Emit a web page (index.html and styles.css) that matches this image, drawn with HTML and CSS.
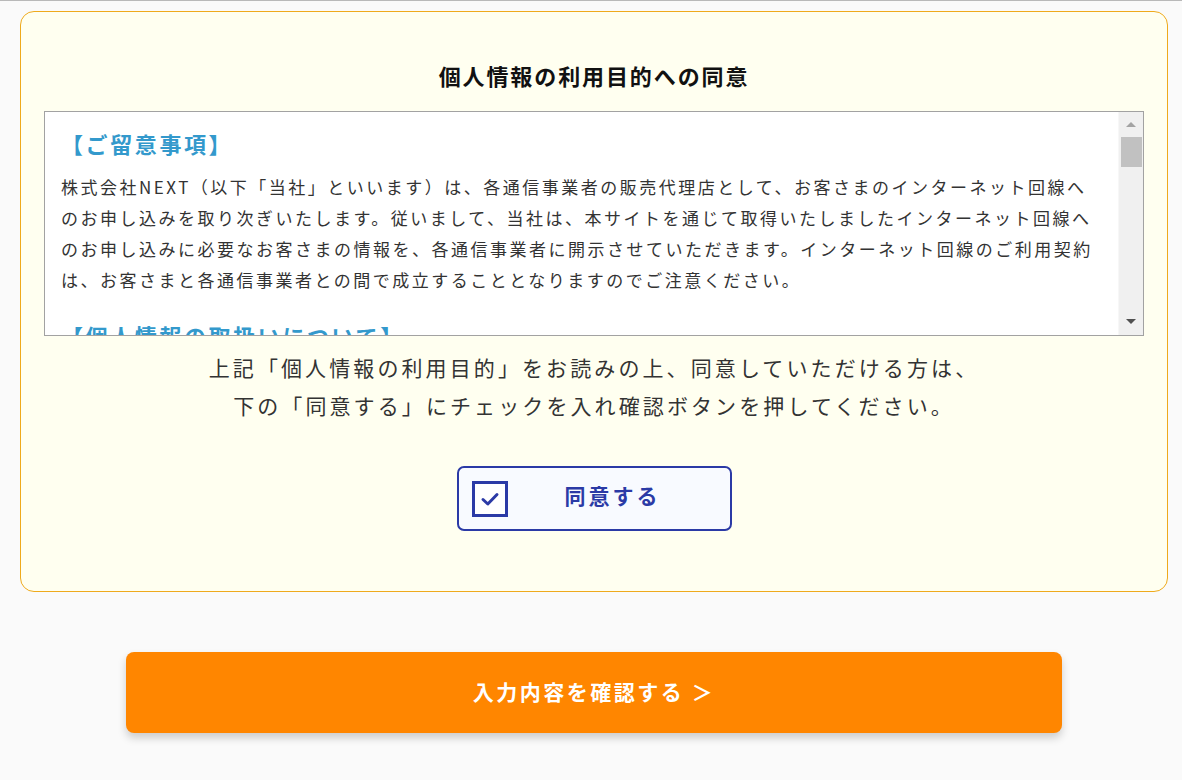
FILE: index.html
```html
<!DOCTYPE html>
<html lang="ja">
<head>
<meta charset="utf-8">
<title>個人情報の利用目的への同意</title>
<link rel="stylesheet" href="styles.css">
</head>
<body>
<main class="page">
  <section class="consent-card">
    <h2 class="consent-title">個人情報の利用目的への同意</h2>
    <div class="terms">
      <div class="terms-body">
        <h3 class="terms-heading">【ご留意事項】</h3>
        <p class="terms-text">株式会社NEXT（以下「当社」といいます）は、各通信事業者の販売代理店として、お客さまのインターネット回線へ<br>のお申し込みを取り次ぎいたします。従いまして、当社は、本サイトを通じて取得いたしましたインターネット回線へ<br>のお申し込みに必要なお客さまの情報を、各通信事業者に開示させていただきます。インターネット回線のご利用契約<br>は、お客さまと各通信事業者との間で成立することとなりますのでご注意ください。</p>
        <h3 class="terms-heading">【個人情報の取扱いについて】</h3>
        <p class="terms-text">当社は、お客さまからお預かりした個人情報を、個人情報の保護に関する法律その他の関係法令を遵守し、適切に取り扱います。</p>
      </div>
      <div class="scrollbar" aria-hidden="true">
        <span class="sb-btn sb-up"></span>
        <span class="sb-track"><span class="sb-thumb"></span></span>
        <span class="sb-btn sb-down"></span>
      </div>
    </div>
    <p class="consent-note">上記「個人情報の利用目的」をお読みの上、同意していただける方は、<br>下の「同意する」にチェックを入れ確認ボタンを押してください。</p>
    <label class="agree">
      <span class="agree-box">
        <svg class="agree-check" viewBox="0 0 22 22" width="22" height="22" aria-hidden="true"><path d="M4 11.5 L8.8 16 L18 6.5" fill="none" stroke="#2b3aa6" stroke-width="3" stroke-linecap="round" stroke-linejoin="round"/></svg>
      </span>
      <span class="agree-text">同意する</span>
    </label>
  </section>
  <div class="cta-row">
    <button class="cta" type="button">入力内容を確認する ＞</button>
  </div>
</main>
</body>
</html>
```
FILE: styles.css
```css
html, body {
  margin: 0;
  padding: 0;
}
body {
  background: #fafafa;
  border-top: 1px solid #b9b9b9;
  font-family: "Noto Sans CJK JP", "Noto Sans", sans-serif;
  color: #333;
}
.page {
  padding: 10px 14px 40px 20px;
}
.consent-card {
  background: #fffff0;
  border: 1px solid #efaa1c;
  border-radius: 14px;
  padding: 48px 23px 60px;
}
.consent-title {
  margin: 0 0 21px;
  text-align: center;
  font-size: 22px;
  line-height: 30px;
  letter-spacing: 1.9px;
  font-weight: 700;
  color: #111;
}
.terms {
  box-sizing: border-box;
  display: flex;
  height: 225px;
  border: 1px solid #a2a2a2;
  background: #fff;
  overflow: hidden;
}
.terms-body {
  flex: 1;
  min-width: 0;
  overflow: hidden;
  padding: 13px 10px 20px 16px;
}
.scrollbar {
  flex: 0 0 24px;
  display: flex;
  flex-direction: column;
  background: #f0f0f0;
  border-left: 1px solid #f7f7f7;
}
.sb-btn {
  flex: 0 0 24px;
  display: flex;
  align-items: center;
  justify-content: center;
}
.sb-up::before,
.sb-down::before {
  content: "";
  width: 0;
  height: 0;
  border-left: 5px solid transparent;
  border-right: 5px solid transparent;
}
.sb-up::before {
  border-bottom: 5px solid #a3a3a3;
}
.sb-down::before {
  border-top: 5px solid #505050;
  margin-bottom: 4px;
}
.sb-track {
  flex: 1;
  padding: 1px 1px 0 2px;
}
.sb-thumb {
  display: block;
  height: 30px;
  background: #c1c1c1;
}
.terms-heading {
  margin: 0 0 10px;
  font-size: 22px;
  line-height: 36px;
  letter-spacing: 2.6px;
  font-weight: 700;
  color: #3399cc;
}
.terms-text {
  margin: 0 0 22px;
  font-size: 17px;
  line-height: 31px;
  letter-spacing: 2.5px;
  color: #333;
  white-space: nowrap;
}
.consent-note {
  margin: 12px 0 0;
  text-align: center;
  font-size: 21px;
  line-height: 38px;
  letter-spacing: 3.1px;
  color: #333;
}
.agree {
  box-sizing: border-box;
  display: flex;
  align-items: center;
  width: 275px;
  height: 65px;
  margin: 42px auto 0;
  padding: 0 12px 0 13px;
  border: 2px solid #2b3aa6;
  border-radius: 7px;
  background: #f8faff;
  cursor: pointer;
}
.agree-box {
  box-sizing: border-box;
  display: flex;
  align-items: center;
  justify-content: center;
  width: 36px;
  height: 36px;
  border: 3px solid #2b3aa6;
  background: #fff;
}
.agree-text {
  flex: 1;
  padding-bottom: 8px;
  text-align: center;
  font-size: 21px;
  line-height: 26px;
  font-weight: 700;
  letter-spacing: 3px;
  color: #2b3aa6;
}
.cta-row {
  display: flex;
  justify-content: center;
  margin-top: 60px;
}
.cta {
  width: 936px;
  height: 81px;
  padding: 0 0 4px;
  border: none;
  border-radius: 8px;
  background: #ff8600;
  box-shadow: 0 5px 8px rgba(0, 0, 0, 0.18);
  font-family: "Noto Sans CJK JP", "Noto Sans", sans-serif;
  font-size: 21px;
  font-weight: 700;
  letter-spacing: 2.5px;
  color: #fff;
  cursor: pointer;
}
```
